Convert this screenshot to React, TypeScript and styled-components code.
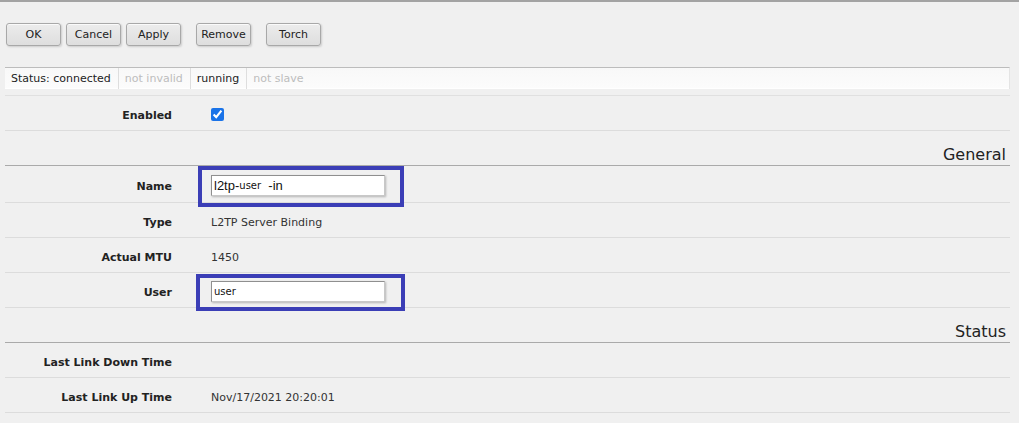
import styled, { createGlobalStyle } from "styled-components"

const GlobalStyle = createGlobalStyle`
  html, body {
    margin: 0;
    padding: 0;
    background: #f0f0f0;
  }
  body {
    font-family: "DejaVu Sans", Verdana, sans-serif;
    font-size: 11px;
    color: #222;
  }
`

interface Row {
  label: string
  value?: string
  kind?: "text" | "check" | "name" | "user"
}

const general: Row[] = [
  { label: "Name", kind: "name" },
  { label: "Type", value: "L2TP Server Binding" },
  { label: "Actual MTU", value: "1450" },
  { label: "User", kind: "user" },
]

const status: Row[] = [
  { label: "Last Link Down Time", value: "" },
  { label: "Last Link Up Time", value: "Nov/17/2021 20:20:01" },
]

function FormRow({ row }: { row: Row }) {
  let value: React.ReactNode = <Text>{row.value}</Text>
  if (row.kind === "check") value = <Check type="checkbox" defaultChecked />
  if (row.kind === "name")
    value = (
      <Highlight $t={9} $r={19} $b={11} $l={13}>
        <Field>
          l2tp-<Small>user</Small>
          {"\u00a0\u00a0"}-in
        </Field>
      </Highlight>
    )
  if (row.kind === "user")
    value = (
      <Highlight $t={7} $r={20} $b={9} $l={15}>
        <Field>
          <Small>user</Small>
        </Field>
      </Highlight>
    )
  return (
    <FormRowStyle $tall={row.kind === "name"}>
      <Label>{row.label}</Label>
      <Value>{value}</Value>
    </FormRowStyle>
  )
}

export default function App() {
  return (
    <Page>
      <GlobalStyle />
      <Toolbar>
        <Button>OK</Button>
        <Button>Cancel</Button>
        <Button>Apply</Button>
        <Button $gap>Remove</Button>
        <Button $gap>Torch</Button>
      </Toolbar>
      <StatusBar>
        <StatusItem>Status: connected</StatusItem>
        <StatusItem $off>not invalid</StatusItem>
        <StatusItem>running</StatusItem>
        <StatusItem $off>not slave</StatusItem>
      </StatusBar>
      <Form>
        <FormRow row={{ label: "Enabled", kind: "check" }} />
        <SectionTitle>General</SectionTitle>
        {general.map((r) => (
          <FormRow key={r.label} row={r} />
        ))}
        <SectionTitle>Status</SectionTitle>
        {status.map((r) => (
          <FormRow key={r.label} row={r} />
        ))}
      </Form>
    </Page>
  )
}

const Page = styled.div`
  border-top: 2px solid #a3a3a3;
  height: 421px;
  overflow: hidden;
`

const Toolbar = styled.div`
  display: flex;
  padding: 21px 0 0 6px;
  gap: 5px;
`

const Button = styled.button<{ $gap?: boolean }>`
  width: 55px;
  height: 23px;
  margin-left: ${(p) => (p.$gap ? "10px" : "0")};
  padding: 0;
  font-family: "DejaVu Sans", Verdana, sans-serif;
  font-size: 11px;
  color: #222;
  background: linear-gradient(#ececec, #dedede);
  border: 1px solid #a8a8a8;
  border-radius: 3px;
  box-shadow: 1px 1px 2px rgba(0, 0, 0, 0.15), inset 0 1px 0 #fafafa;
`

const StatusBar = styled.div`
  display: flex;
  margin: 21px 9px 0 5px;
  height: 21px;
  background: linear-gradient(#f8f8f8, #fcfcfc);
  border-top: 1px solid #bcbcbc;
  border-right: 1px solid #e4e4e4;
  box-shadow: inset 0 -1px 0 #fff;
`

const StatusItem = styled.span<{ $off?: boolean }>`
  display: flex;
  align-items: center;
  padding: 0 7px 0 6px;
  color: ${(p) => (p.$off ? "#bdbdbd" : "#222")};
  border-right: 1px solid #dedede;
  &:last-child {
    border-right: none;
  }
`

const Form = styled.div`
  margin: 6px 9px 0 5px;
  border-top: 1px solid #e0e0e0;
`

const FormRowStyle = styled.div<{ $tall?: boolean }>`
  display: grid;
  grid-template-columns: 167px 1fr;
  column-gap: 39px;
  align-items: center;
  box-sizing: border-box;
  height: ${(p) => (p.$tall ? "37px" : "35px")};
  padding-top: ${(p) => (p.$tall ? "2px" : "3px")};
  border-bottom: 1px solid #dcdcdc;
`

const Label = styled.span`
  padding-top: 2px;
  text-align: right;
  font-weight: bold;
  color: #222;
`

const Value = styled.span`
  display: flex;
  align-items: center;
  color: #333;
`

const Text = styled.span`
  padding-top: 2px;
`

const SectionTitle = styled.div`
  display: flex;
  align-items: flex-end;
  justify-content: flex-end;
  height: 35px;
  padding: 0 4px 1px 0;
  box-sizing: border-box;
  border-bottom: 1px solid #aaaaaa;
  font-size: 16px;
  color: #222;
`

const Check = styled.input`
  width: 13px;
  height: 13px;
  margin: 0;
  accent-color: #1a73e8;
`

const Highlight = styled.span<{ $t: number; $r: number; $b: number; $l: number }>`
  position: relative;
  display: inline-flex;

  &::after {
    content: "";
    position: absolute;
    top: ${(p) => -p.$t}px;
    right: ${(p) => -p.$r}px;
    bottom: ${(p) => -p.$b}px;
    left: ${(p) => -p.$l}px;
    border: 4px solid #3b3eb6;
    pointer-events: none;
  }
`

const Field = styled.div`
  width: 174px;
  height: 21px;
  box-sizing: border-box;
  display: flex;
  align-items: center;
  padding: 0 2px;
  background: #fff;
  border: 1px solid #8f8f8f;
  border-right-color: #c8c8c8;
  border-bottom-color: #c8c8c8;
  box-shadow: 1px 1px 2px rgba(0, 0, 0, 0.25);
  font-family: "Liberation Sans", Arial, sans-serif;
  font-size: 13px;
  color: #111;
  white-space: pre;
`

const Small = styled.span`
  font-family: "DejaVu Sans", Verdana, sans-serif;
  font-size: 10px;
`
